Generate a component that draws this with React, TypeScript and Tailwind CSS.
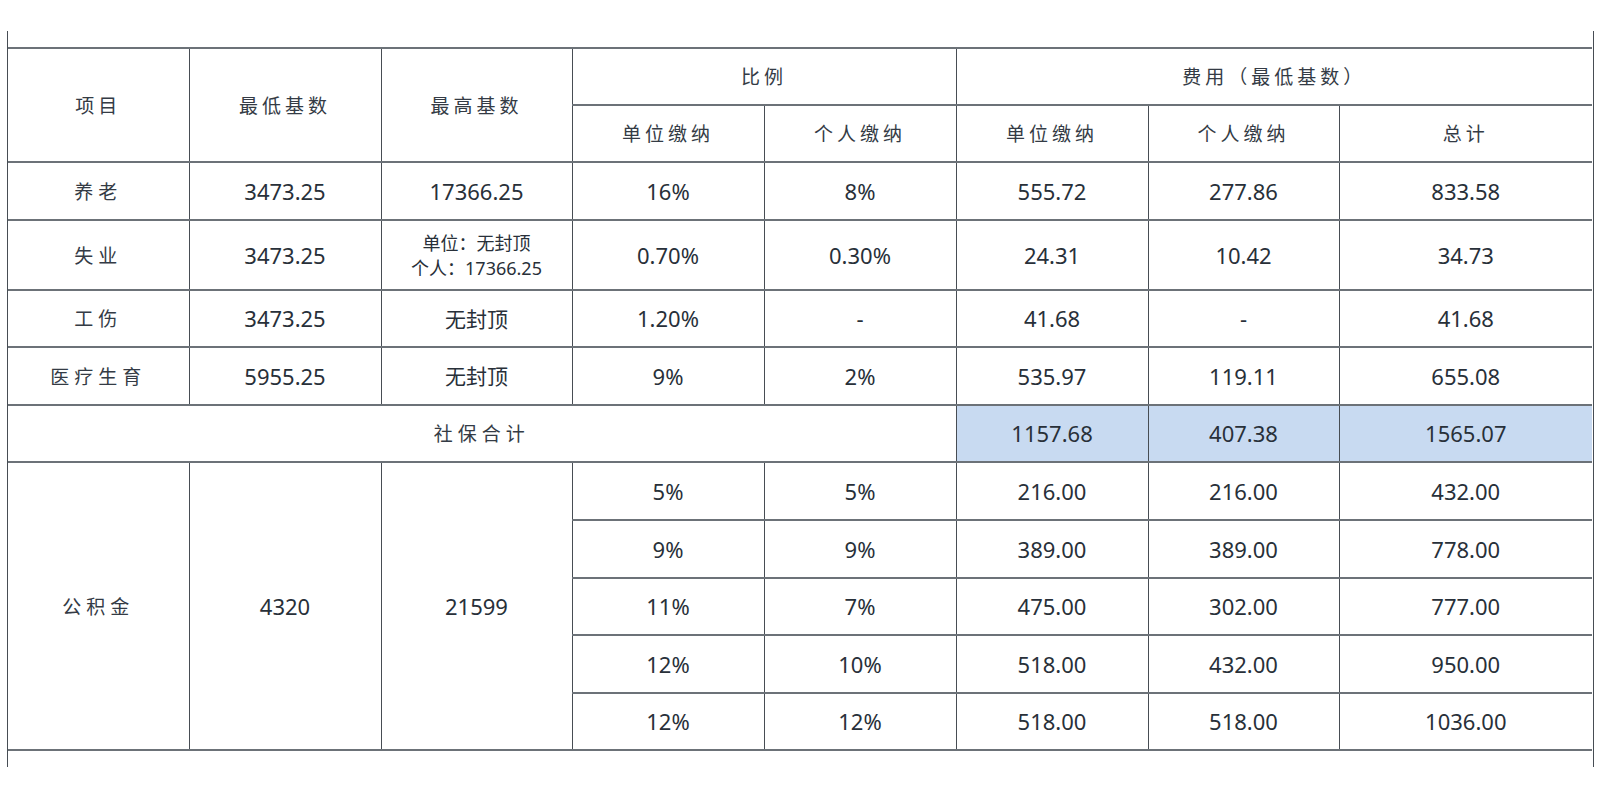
import React from "react";

const num = "font-['Noto_Sans','Open_Sans',sans-serif] text-[22px]";
const cjk = "font-['Noto_Sans_CJK_SC','Noto_Sans',sans-serif]";

const cellBase =
  "border-y-2 border-y-[#6c7278] border-x border-x-[#474d54] text-center align-middle p-0 text-[#283039]";

function Td({
  children,
  className = "",
  colSpan,
  rowSpan,
}: {
  children?: React.ReactNode;
  className?: string;
  colSpan?: number;
  rowSpan?: number;
}) {
  return (
    <td colSpan={colSpan} rowSpan={rowSpan} className={`${cellBase} ${className}`}>
      {children}
    </td>
  );
}

function Label({ children }: { children: React.ReactNode }) {
  return <span className={`${cjk} text-[19px] tracking-[5px] text-[#343b45]`}>{children}</span>;
}

function H({ children }: { children: React.ReactNode }) {
  return <span className={`${cjk} text-[19px] tracking-[4px] text-[#343b45]`}>{children}</span>;
}

function N({ children }: { children: React.ReactNode }) {
  return <span className={num}>{children}</span>;
}

export default function App() {
  const fund = [
    ["5%", "5%", "216.00", "216.00", "432.00", "h-[58px]"],
    ["9%", "9%", "389.00", "389.00", "778.00", "h-[58px]"],
    ["11%", "7%", "475.00", "302.00", "777.00", "h-[57px]"],
    ["12%", "10%", "518.00", "432.00", "950.00", "h-[58px]"],
    ["12%", "12%", "518.00", "518.00", "1036.00", "h-[57px]"],
  ];
  const rows: [string, string, React.ReactNode, string, string, string, string, string, string][] = [
    ["养老", "3473.25", <N>17366.25</N>, "16%", "8%", "555.72", "277.86", "833.58", "h-[58px]"],
    [
      "失业",
      "3473.25",
      <div className={`${cjk} text-[18px] leading-[25px] text-[#283039]`}>
        <div>单位：无封顶</div>
        <div>
          个人：<span className="font-['Noto_Sans',sans-serif] text-[18px]">17366.25</span>
        </div>
      </div>,
      "0.70%",
      "0.30%",
      "24.31",
      "10.42",
      "34.73",
      "h-[70px]",
    ],
    [
      "工伤",
      "3473.25",
      <span className={`${cjk} text-[21px]`}>无封顶</span>,
      "1.20%",
      "-",
      "41.68",
      "-",
      "41.68",
      "h-[57px]",
    ],
    [
      "医疗生育",
      "5955.25",
      <span className={`${cjk} text-[21px]`}>无封顶</span>,
      "9%",
      "2%",
      "535.97",
      "119.11",
      "655.08",
      "h-[58px]",
    ],
  ];

  return (
    <div className="w-[1600px] h-[800px] bg-white overflow-hidden">
      <div className="ml-[7px] mt-[31px] w-[1587px] h-[736px] border-x-[1.5px] border-x-[#474d54] pt-[16px]">
        <table className="table-fixed border-collapse w-[1584px]">
          <colgroup>
            <col className="w-[181px]" />
            <col className="w-[192px]" />
            <col className="w-[191px]" />
            <col className="w-[192px]" />
            <col className="w-[192px]" />
            <col className="w-[192px]" />
            <col className="w-[191px]" />
            <col className="w-[253px]" />
          </colgroup>
          <tbody>
            <tr className="h-[57px]">
              <Td rowSpan={2} className="border-l-0">
                <H>项目</H>
              </Td>
              <Td rowSpan={2}>
                <H>最低基数</H>
              </Td>
              <Td rowSpan={2}>
                <H>最高基数</H>
              </Td>
              <Td colSpan={2}>
                <H>比例</H>
              </Td>
              <Td colSpan={3} className="border-r-0">
                <H>费用（最低基数）</H>
              </Td>
            </tr>
            <tr className="h-[57px]">
              <Td>
                <H>单位缴纳</H>
              </Td>
              <Td>
                <H>个人缴纳</H>
              </Td>
              <Td>
                <H>单位缴纳</H>
              </Td>
              <Td>
                <H>个人缴纳</H>
              </Td>
              <Td className="border-r-0">
                <H>总计</H>
              </Td>
            </tr>
            {rows.map((r) => (
              <tr key={r[0]} className={r[8]}>
                <Td className="border-l-0">
                  <Label>{r[0]}</Label>
                </Td>
                <Td>
                  <N>{r[1]}</N>
                </Td>
                <Td>{r[2]}</Td>
                <Td>
                  <N>{r[3]}</N>
                </Td>
                <Td>
                  <N>{r[4]}</N>
                </Td>
                <Td>
                  <N>{r[5]}</N>
                </Td>
                <Td>
                  <N>{r[6]}</N>
                </Td>
                <Td className="border-r-0">
                  <N>{r[7]}</N>
                </Td>
              </tr>
            ))}
            <tr className="h-[57px]">
              <Td colSpan={5} className="border-l-0">
                <Label>社保合计</Label>
              </Td>
              <Td className="bg-[#c8daf1]">
                <N>1157.68</N>
              </Td>
              <Td className="bg-[#c8daf1]">
                <N>407.38</N>
              </Td>
              <Td className="bg-[#c8daf1] border-r-0">
                <N>1565.07</N>
              </Td>
            </tr>
            {fund.map((f, i) => (
              <tr key={i} className={f[5]}>
                {i === 0 && (
                  <>
                    <Td rowSpan={5} className="border-l-0">
                      <Label>公积金</Label>
                    </Td>
                    <Td rowSpan={5}>
                      <N>4320</N>
                    </Td>
                    <Td rowSpan={5}>
                      <N>21599</N>
                    </Td>
                  </>
                )}
                <Td>
                  <N>{f[0]}</N>
                </Td>
                <Td>
                  <N>{f[1]}</N>
                </Td>
                <Td>
                  <N>{f[2]}</N>
                </Td>
                <Td>
                  <N>{f[3]}</N>
                </Td>
                <Td className="border-r-0">
                  <N>{f[4]}</N>
                </Td>
              </tr>
            ))}
          </tbody>
        </table>
      </div>
    </div>
  );
}
